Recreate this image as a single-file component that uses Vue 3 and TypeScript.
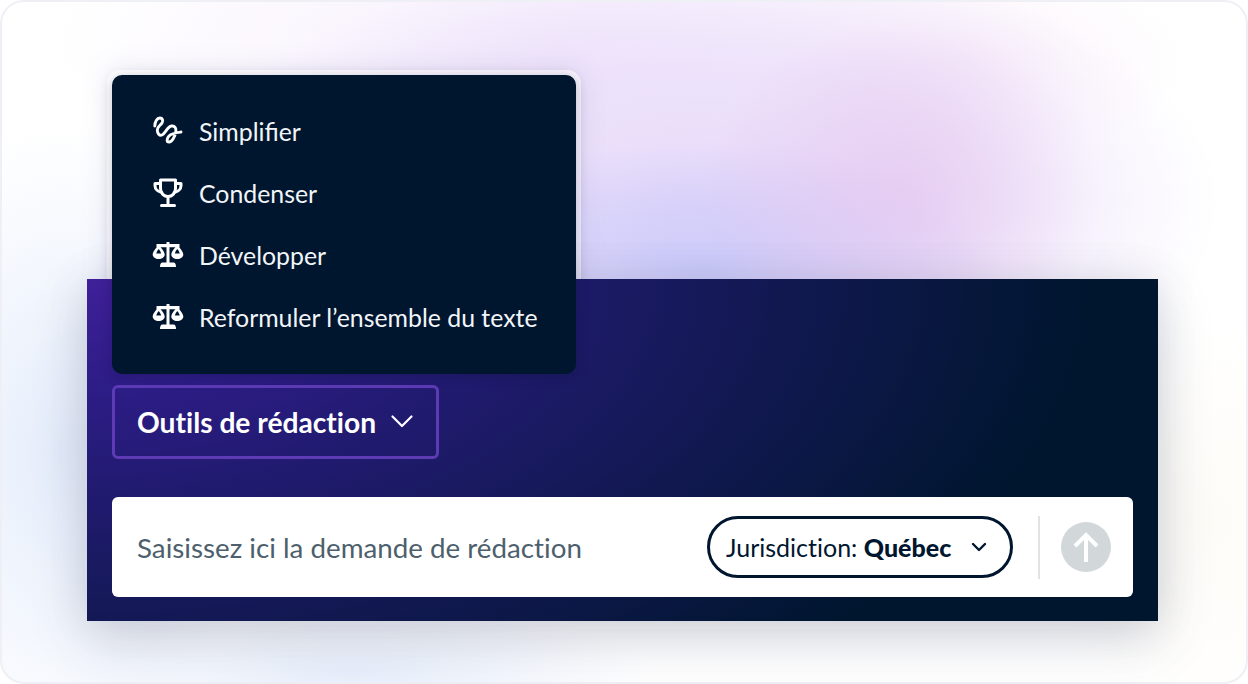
<script setup lang="ts">
const tools = [
  { label: 'Simplifier', icon: 'squiggle' },
  { label: 'Condenser', icon: 'trophy' },
  { label: 'Développer', icon: 'scale' },
  { label: 'Reformuler l’ensemble du texte', icon: 'scale' }
]
</script>

<template>
  <div class="page">
    <div class="frame">
      <div class="panel">
        <div class="menu-halo"></div>
        <ul class="menu">
          <li v-for="tool in tools" :key="tool.label" class="menu-item">
            <svg v-if="tool.icon === 'squiggle'" class="menu-icon" viewBox="0 0 32 32" fill="none" stroke="currentColor" stroke-width="2.9" stroke-linecap="round" stroke-linejoin="round">
              <path d="M2.8 11C2.8 7 5 3 7.8 3C10.5 3 11.5 5.5 10 8C8.5 10.5 5.3 11.5 5.3 15C5.3 18.5 7.5 21 10 20C13 18.8 15.5 11.5 19.5 11C23 10.6 24.5 13.5 23.8 17C23 21.5 20 27 17 27C14.5 27 14.5 23.5 17 21C20 18 25 17.5 29 17" />
            </svg>
            <svg v-else-if="tool.icon === 'trophy'" class="menu-icon" viewBox="0 0 32 32" fill="none" stroke="currentColor" stroke-width="3" stroke-linecap="round" stroke-linejoin="round">
              <path d="M8.5 3H23.5V11.5C23.5 16.5 20 19.5 16 19.5C12 19.5 8.5 16.5 8.5 11.5Z" />
              <path d="M8.5 6.5H3V8.5C3 12 5.8 14.8 9.8 15.4" />
              <path d="M23.5 6.5H29V8.5C29 12 26.2 14.8 22.2 15.4" />
              <path d="M16 19.5V28" />
              <path d="M9.5 28.5H22.5" />
            </svg>
            <svg v-else class="menu-icon" viewBox="0 0 32 32" fill="currentColor">
              <path d="M14.5 3H17.5V5H27.5V8.3H17.5V23.5H21.5C23.2 23.5 24 25 24 28H8C8 25 8.8 23.5 10.5 23.5H14.5V8.3H4.5V5H14.5Z" />
              <path fill-rule="evenodd" d="M6.7 6C4.6 8.2 0.9 12.5 0.7 15.5C0.7 18.2 3.4 20 6.7 20C10 20 12.7 18.2 12.7 15.5C12.5 12.5 8.8 8.2 6.7 6ZM6.7 10C5.6 11.3 4.7 12.8 4.2 14.5H9.2C8.7 12.8 7.8 11.3 6.7 10Z" />
              <path fill-rule="evenodd" d="M25.3 6C23.2 8.2 19.5 12.5 19.3 15.5C19.3 18.2 22 20 25.3 20C28.6 20 31.3 18.2 31.3 15.5C31.1 12.5 27.4 8.2 25.3 6ZM25.3 10C24.2 11.3 23.3 12.8 22.8 14.5H27.8C27.3 12.8 26.4 11.3 25.3 10Z" />
            </svg>
            <span>{{ tool.label }}</span>
          </li>
        </ul>

        <button class="tools-btn" type="button">
          <span>Outils de rédaction</span>
          <svg class="tools-chevron" viewBox="0 0 24 24" fill="none" stroke="currentColor" stroke-width="2.2" stroke-linecap="round" stroke-linejoin="round">
            <path d="M2.5 6.5L12 16L21.5 6.5" />
          </svg>
        </button>

        <div class="prompt">
          <span class="placeholder">Saisissez ici la demande de rédaction</span>
          <button class="jurisdiction" type="button">
            <span>Jurisdiction: <b>Québec</b></span>
            <svg class="jurisdiction-chevron" viewBox="0 0 16 16" fill="none" stroke="currentColor" stroke-width="2.4" stroke-linecap="round" stroke-linejoin="round">
              <path d="M2 5L8 11L14 5" />
            </svg>
          </button>
          <div class="divider"></div>
          <button class="send" type="button" aria-label="Envoyer">
            <svg viewBox="0 0 26 30" fill="none" stroke="#fff" stroke-width="4" stroke-linejoin="miter">
              <path d="M13 30V3" />
              <path d="M2 14L13 3L24 14" />
            </svg>
          </button>
        </div>
      </div>
    </div>
  </div>
</template>

<style>
html, body {
  margin: 0;
  background: #fff;
}
</style>

<style scoped>
.page {
  width: 1248px;
  height: 684px;
  overflow: hidden;
  font-family: Lato, "Liberation Sans", sans-serif;
}

.frame {
  isolation: isolate;
  box-sizing: border-box;
  width: 1248px;
  height: 684px;
  padding: 277px 88px 0 85px;
  border: 2px solid #eef0f5;
  border-radius: 24px;
  background:
    radial-gradient(ellipse 200px 170px at 900px 190px, rgba(226, 190, 236, 0.6), rgba(226, 190, 236, 0.35) 45%, rgba(226, 190, 236, 0) 100%),
    radial-gradient(ellipse 300px 130px at 700px 270px, rgba(196, 198, 250, 0.85), rgba(196, 198, 250, 0.45) 50%, rgba(196, 198, 250, 0) 100%),
    radial-gradient(ellipse 520px 250px at 700px 200px, rgba(226, 210, 248, 0.85), rgba(226, 210, 248, 0.5) 55%, rgba(226, 210, 248, 0) 100%),
    radial-gradient(ellipse 520px 150px at 560px 40px, rgba(244, 234, 252, 0.8), rgba(244, 234, 252, 0) 100%),
    radial-gradient(ellipse 240px 100px at 950px 60px, rgba(250, 236, 248, 0.7), rgba(250, 236, 248, 0) 100%),
    radial-gradient(ellipse 200px 330px at 60px 450px, rgba(222, 232, 250, 0.8), rgba(222, 232, 250, 0) 100%),
    radial-gradient(ellipse 300px 70px at 350px 670px, rgba(222, 232, 250, 0.7), rgba(222, 232, 250, 0) 100%),
    radial-gradient(ellipse 180px 200px at 1200px 520px, rgba(252, 248, 238, 0.5), rgba(252, 248, 238, 0) 100%),
    #fff;
}

.panel {
  position: relative;
  box-sizing: border-box;
  width: 1071px;
  height: 342px;
  padding: 106px 25px 24px;
  background:
    radial-gradient(ellipse 1000px 520px at 0 0, #3f2099 0%, #2c1c85 22%, #1c1a66 50%, rgba(10, 24, 64, 0) 100%),
    #00162f;
  box-shadow: 0 18px 50px rgba(70, 76, 110, 0.22), 0 0 40px rgba(90, 90, 120, 0.1);
  color: #fff;
}

/* soft white edge round the menu, only seen where it sticks out above the panel */
.menu-halo {
  position: absolute;
  top: -209px;
  left: 20px;
  z-index: -1;
  width: 474px;
  height: 309px;
  background: rgba(255, 255, 255, 0.55);
  border-radius: 14px;
  box-shadow: 0 0 26px rgba(120, 120, 170, 0.18);
}

.menu {
  position: absolute;
  top: -204px;
  left: 25px;
  box-sizing: border-box;
  width: 464px;
  height: 299px;
  margin: 0;
  padding: 25px 0 0 40px;
  list-style: none;
  background: #00162f;
  border-radius: 10px;
  box-shadow: 0 2px 12px rgba(10, 10, 50, 0.25);
  font-size: 24.85px;
}

.menu-item {
  display: flex;
  align-items: center;
  gap: 15px;
  height: 62px;
  color: #f2f5f8;
}

.menu-icon {
  flex: none;
  width: 32px;
  height: 32px;
  color: #fff;
}

.tools-btn {
  display: flex;
  align-items: center;
  gap: 14px;
  box-sizing: border-box;
  width: 327px;
  height: 74px;
  padding: 0 0 0 22px;
  border: 3px solid #5c3bb5;
  border-radius: 6px;
  background: transparent;
  color: #fff;
  font: 700 28.2px Lato, "Liberation Sans", sans-serif;
  font-variant-ligatures: none;
}

.tools-chevron {
  width: 24px;
  height: 24px;
}

.prompt {
  display: flex;
  align-items: center;
  box-sizing: border-box;
  height: 100px;
  margin-top: 38px;
  padding: 0 22px 0 25px;
  background: #fff;
  border-radius: 6px;
  color: #00162f;
}

.placeholder {
  flex: 1;
  color: #4d5f6c;
  font-size: 27.75px;
  font-variant-ligatures: none;
}

.jurisdiction {
  display: flex;
  align-items: center;
  justify-content: space-between;
  box-sizing: border-box;
  width: 306px;
  height: 62px;
  padding: 0 23px 0 16px;
  border: 3px solid #00162f;
  border-radius: 31px;
  background: #fff;
  color: #00162f;
  font: 400 25px Lato, "Liberation Sans", sans-serif;
  font-variant-ligatures: none;
}

.jurisdiction b {
  font-weight: 900;
}

.jurisdiction-chevron {
  width: 16px;
  height: 16px;
}

.divider {
  width: 2px;
  height: 63px;
  margin: 0 21px 0 25px;
  background: #dfe3e6;
}

.send {
  display: flex;
  align-items: center;
  justify-content: center;
  width: 50px;
  height: 50px;
  padding: 0;
  border: none;
  border-radius: 50%;
  background: #d2d8da;
}

.send svg {
  width: 26px;
  height: 30px;
}
</style>
